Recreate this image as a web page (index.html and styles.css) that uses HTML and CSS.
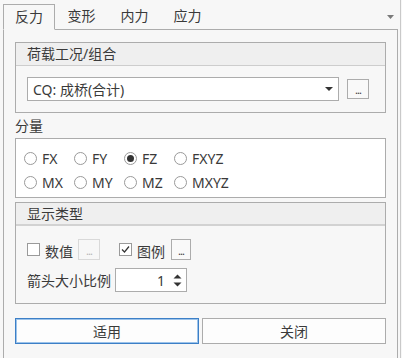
FILE: index.html
```html
<!DOCTYPE html>
<html lang="zh-CN">
<head>
    <meta charset="UTF-8">
    <title>结果显示</title>
    <link rel="stylesheet" href="styles.css">
</head>
<body>
    <div class="window">
        <div class="tabbar">
            <div class="tab active">反力</div>
            <div class="tab">变形</div>
            <div class="tab">内力</div>
            <div class="tab">应力</div>
            <svg class="tab-menu" width="7" height="4" viewBox="0 0 7 4"><path d="M0 0H7L3.5 4Z" fill="#7a7a7a"/></svg>
        </div>

        <div class="content">
            <div class="group">
                <div class="group-head">荷载工况/组合</div>
                <div class="group-body combo-row">
                    <div class="combo">
                        <span>CQ: 成桥(合计)</span>
                        <svg width="8" height="4" viewBox="0 0 8 4"><path d="M0 0H8L4 4Z" fill="#333"/></svg>
                    </div>
                    <span class="dots">...</span>
                </div>
            </div>

            <div class="label">分量</div>
            <div class="radios">
                <div class="radio"><span class="circle"></span>FX</div>
                <div class="radio"><span class="circle"></span>FY</div>
                <div class="radio"><span class="circle checked"></span>FZ</div>
                <div class="radio"><span class="circle"></span>FXYZ</div>
                <div class="radio"><span class="circle"></span>MX</div>
                <div class="radio"><span class="circle"></span>MY</div>
                <div class="radio"><span class="circle"></span>MZ</div>
                <div class="radio"><span class="circle"></span>MXYZ</div>
            </div>

            <div class="group second">
                <div class="group-head">显示类型</div>
                <div class="group-body">
                    <div class="checks">
                        <span class="box"></span>
                        <span class="check-text">数值</span>
                        <span class="dots disabled">...</span>
                        <span class="box gap">
                            <svg width="11" height="11" viewBox="0 0 11 11"><path d="M2 5.5L4.5 8L9 2.5" fill="none" stroke="#333" stroke-width="1.2"/></svg>
                        </span>
                        <span class="check-text">图例</span>
                        <span class="dots legend">...</span>
                    </div>
                    <div class="scale-row">
                        <span>箭头大小比例</span>
                        <div class="spinner">
                            <span class="value">1</span>
                            <svg width="9" height="13" viewBox="0 0 9 13"><path d="M0.5 4.5H8.5L4.5 0.5Z M0.5 8.5H8.5L4.5 12.5Z" fill="#333"/></svg>
                        </div>
                    </div>
                </div>
            </div>

            <div class="actions">
                <button class="btn primary">适用</button>
                <button class="btn">关闭</button>
            </div>
        </div>
    </div>
</body>
</html>
```

FILE: styles.css
```css
* {
    box-sizing: border-box;
}
body {
    margin: 0;
    background: #f7f7f7;
    font-family: "Noto Sans", "Noto Sans CJK SC", sans-serif;
    font-size: 14px;
    color: #3a3a3a;
}
.window {
    width: 401px;
    height: 358px;
    border-right: 1px solid #c9c9c9;
}
.tabbar {
    position: relative;
    display: flex;
    align-items: flex-end;
    margin-left: 3px;
    width: 395px;
    height: 30px;
    border-bottom: 1px solid #acacac;
}
.tab {
    width: 53px;
    height: 25px;
    line-height: 24px;
    text-align: center;
}
.tab.active {
    width: 52px;
    height: 26px;
    margin-bottom: -1px;
    border: 1px solid #acacac;
    border-bottom-color: #f7f7f7;
    background: #f7f7f7;
}
.tab-menu {
    position: absolute;
    right: 4px;
    top: 15px;
}
.content {
    margin-left: 3px;
    width: 395px;
    height: 328px;
    border-left: 1px solid #acacac;
    border-right: 1px solid #acacac;
    padding: 12px 11px 0 11px;
}
.group {
    border: 1px solid #acacac;
}
.group.second {
    margin-top: 4px;
}
.group-head {
    height: 23px;
    line-height: 22px;
    padding-left: 11px;
    background: #efefef;
    border-bottom: 1px solid #cdcdcd;
}
.second .group-head {
    border-bottom: 2px solid #d2d2d2;
    height: 23px;
    line-height: 21px;
}
.group-body {
    padding: 11px 16px 11px 11px;
}
.combo-row {
    display: flex;
    align-items: center;
}
.combo {
    display: flex;
    align-items: center;
    justify-content: space-between;
    width: 312px;
    height: 24px;
    padding: 0 5px 0 5px;
    background: #fff;
    border: 1px solid #acacac;
}
.dots {
    display: flex;
    align-items: flex-end;
    justify-content: center;
    width: 22px;
    height: 20px;
    margin-left: 8px;
    padding-bottom: 3px;
    border: 1px solid #acacac;
    background: #f9f9f9;
    font-size: 11px;
    line-height: 11px;
    letter-spacing: -1px;
}
.label {
    height: 25px;
    line-height: 25px;
}
.radios {
    display: grid;
    grid-template-columns: repeat(4, 50px);
    grid-auto-rows: 24px;
    padding: 7px 0 3px 8px;
    background: #fff;
    border: 1px solid #acacac;
}
.radio {
    display: flex;
    align-items: center;
    white-space: nowrap;
}
.circle {
    position: relative;
    flex-shrink: 0;
    width: 13px;
    height: 13px;
    margin-right: 5px;
    border: 1px solid #9a9a9a;
    border-radius: 50%;
    background: #fff;
}
.circle.checked::after {
    content: "";
    position: absolute;
    left: 2px;
    top: 2px;
    width: 7px;
    height: 7px;
    border-radius: 50%;
    background: #333;
}
.checks {
    display: flex;
    align-items: center;
    height: 21px;
    margin-top: 2px;
}
.box {
    display: flex;
    flex-shrink: 0;
    align-items: center;
    justify-content: center;
    width: 13px;
    height: 13px;
    margin-right: 5px;
    border: 1px solid #9a9a9a;
    background: #fff;
}
.box.gap {
    margin-left: 19px;
}
.check-text {
    margin-top: 2px;
}
.checks .dots {
    height: 21px;
    margin-left: 5px;
}
.dots.disabled {
    border-color: #d9d9d9;
    color: #b5b5b5;
    background: #f7f7f7;
}
.dots.legend {
    width: 20px;
    margin-left: 6px;
}
.scale-row {
    display: flex;
    align-items: center;
    margin-top: 8px;
}
.spinner {
    display: flex;
    align-items: center;
    justify-content: flex-end;
    width: 72px;
    height: 24px;
    margin-left: 4px;
    padding-right: 4px;
    background: #fff;
    border: 1px solid #acacac;
}
.spinner .value {
    margin-right: 8px;
}
.actions {
    display: flex;
    gap: 3px;
    margin-top: 14px;
}
.btn {
    width: 184px;
    height: 26px;
    padding: 0;
    font-family: inherit;
    font-size: 14px;
    color: #3a3a3a;
    background: #fdfdfd;
    border: 1px solid #acacac;
}
.btn.primary {
    border: 1px solid #3c7fc6;
    box-shadow: inset 0 0 0 1px #9cc3ea;
}
```
